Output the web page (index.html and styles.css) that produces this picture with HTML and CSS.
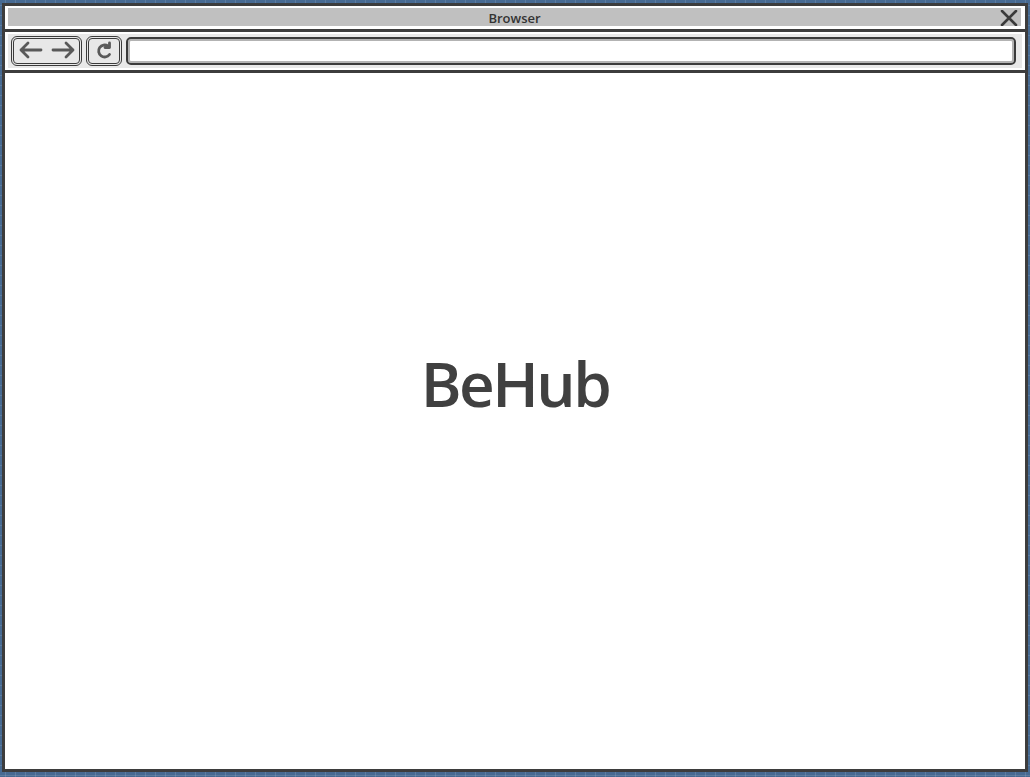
FILE: index.html
```html
<!DOCTYPE html>
<html>
<head>
<meta charset="utf-8">
<title>Browser</title>
<link rel="stylesheet" href="styles.css">
</head>
<body>
<div class="frame">
  <div class="titlebar">
    <span class="title">Browser</span>
    <svg class="close" width="18" height="16" viewBox="0 0 18 16"><path d="M2 1 L16 15 M16 1 L2 15" stroke="#3a3a3a" stroke-width="2.6" stroke-linecap="round" fill="none"/></svg>
  </div>
  <div class="rule"></div>
  <div class="toolbar">
    <div class="btn nav">
      <svg width="65" height="24" viewBox="0 0 65 24"><g stroke="#595959" stroke-width="2.8" stroke-linecap="round" stroke-linejoin="round" fill="none"><path d="M7 11 H27 M14 4 L7 11 L14 18"/><path d="M39 11 H59 M52 4 L59 11 L52 18"/></g></svg>
    </div>
    <div class="btn refresh">
      <svg width="30" height="24" viewBox="0 0 30 24"><g stroke="#595959" stroke-width="2.8" stroke-linecap="round" stroke-linejoin="round" fill="none"><path d="M20.5 15.5 A6 6 0 1 1 19 7"/><path d="M20.5 4 L20.5 8.5 L16 8.5"/></g></svg>
    </div>
    <div class="address"></div>
  </div>
  <div class="rule"></div>
  <div class="content">
    <h1 class="brand">BeHub</h1>
  </div>
</div>
</body>
</html>
```
FILE: styles.css
```css
html, body {
  margin: 0;
  padding: 0;
}
body {
  width: 1030px;
  height: 777px;
  box-sizing: border-box;
  padding: 3px 2px 5px 2px;
  background-color: #476a92;
  background-image:
    linear-gradient(rgba(255,255,255,0.12) 1px, transparent 1px),
    linear-gradient(90deg, rgba(255,255,255,0.12) 1px, transparent 1px);
  background-size: 10px 10px;
  background-position: 5px 5px;
  overflow: hidden;
}
.frame {
  height: 100%;
  box-sizing: border-box;
  border: 3px solid #3d3d3d;
  background: #fff;
  display: flex;
  flex-direction: column;
}
.titlebar {
  margin: 2px 4px 3px 3px;
  height: 18px;
  background: #c0c0c0;
  display: flex;
  align-items: center;
  justify-content: center;
  position: relative;
}
.title {
  font-family: "Open Sans", "Liberation Sans", sans-serif;
  font-size: 13px;
  font-weight: 600;
  color: #333;
  line-height: 18px;
  padding-top: 1px;
}
.close {
  position: absolute;
  right: 3px;
  top: 2px;
}
.rule {
  height: 3px;
  background: #3d3d3d;
  flex: none;
}
.toolbar {
  margin: 2px 3px 2px 3px;
  background: #e8e8e8;
  padding: 2px 3px;
  display: flex;
  gap: 4px;
  height: 30px;
}
.btn {
  box-sizing: border-box;
  height: 30px;
  border: 3px double #3a3a3a;
  border-radius: 6px;
  background: #e8e8e8;
  display: flex;
  align-items: center;
  justify-content: center;
}
.nav { width: 71px; }
.refresh { width: 36px; }
.address {
  box-sizing: border-box;
  margin-top: 1px;
  height: 28px;
  width: 890px;
  border: 2px solid #3a3a3a;
  border-radius: 5px;
  background: #fff;
  box-shadow: inset 0 0 0 2px #b3b3b3;
}
.content {
  flex: 1;
  display: flex;
  align-items: center;
  justify-content: center;
  padding-bottom: 76px;
}
.brand {
  margin: 0;
  font-family: "Open Sans", "Liberation Sans", sans-serif;
  font-weight: 600;
  font-size: 62px;
  letter-spacing: -2.5px;
  color: #404040;
}
```
